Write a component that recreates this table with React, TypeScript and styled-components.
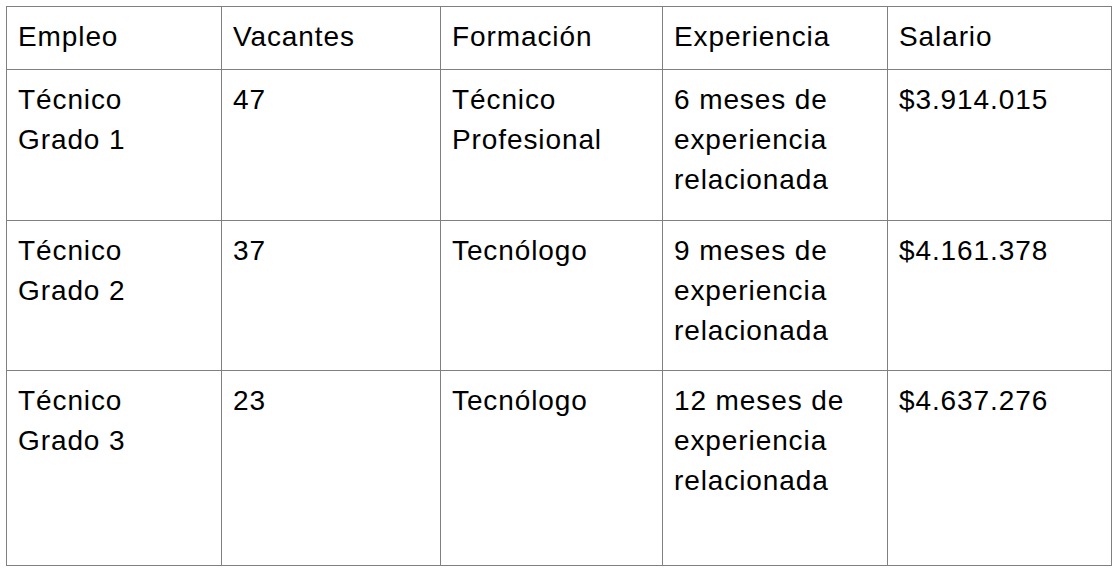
import styled, { createGlobalStyle } from "styled-components";

const GlobalStyle = createGlobalStyle`
  html, body {
    margin: 0;
    padding: 0;
    background: #ffffff;
  }
`;

const Page = styled.div`
  padding: 6px 0 0 6px;
`;

const Table = styled.table`
  border-collapse: collapse;
  table-layout: fixed;
  width: 1105px;
  font-family: "Liberation Sans", Arial, Helvetica, sans-serif;
  font-size: 28px;
  letter-spacing: 0.9px;
  line-height: 40px;
  color: #000;
`;

const Row = styled.tr<{ $height: number }>`
  height: ${(props) => props.$height}px;
`;

const HeadCell = styled.th`
  border: 1px solid #808080;
  padding: 10px 11px;
  text-align: left;
  vertical-align: top;
  font-weight: normal;
`;

const Cell = styled.td`
  border: 1px solid #808080;
  padding: 10px 11px;
  vertical-align: top;
`;

const columns = [
  { label: "Empleo", width: 215 },
  { label: "Vacantes", width: 219 },
  { label: "Formación", width: 222 },
  { label: "Experiencia", width: 225 },
  { label: "Salario", width: 224 },
];

const rows = [
  {
    height: 151,
    cells: ["Técnico Grado 1", "47", "Técnico Profesional", "6 meses de experiencia relacionada", "$3.914.015"],
  },
  {
    height: 150,
    cells: ["Técnico Grado 2", "37", "Tecnólogo", "9 meses de experiencia relacionada", "$4.161.378"],
  },
  {
    height: 195,
    cells: ["Técnico Grado 3", "23", "Tecnólogo", "12 meses de experiencia relacionada", "$4.637.276"],
  },
];

export default function App() {
  return (
    <>
      <GlobalStyle />
      <Page>
        <Table>
          <colgroup>
            {columns.map((c) => (
              <col key={c.label} style={{ width: c.width }} />
            ))}
          </colgroup>
          <thead>
            <Row $height={63}>
              {columns.map((c) => (
                <HeadCell key={c.label}>{c.label}</HeadCell>
              ))}
            </Row>
          </thead>
          <tbody>
            {rows.map((r, i) => (
              <Row key={i} $height={r.height}>
                {r.cells.map((text, j) => (
                  <Cell key={j}>{text}</Cell>
                ))}
              </Row>
            ))}
          </tbody>
        </Table>
      </Page>
    </>
  );
}
